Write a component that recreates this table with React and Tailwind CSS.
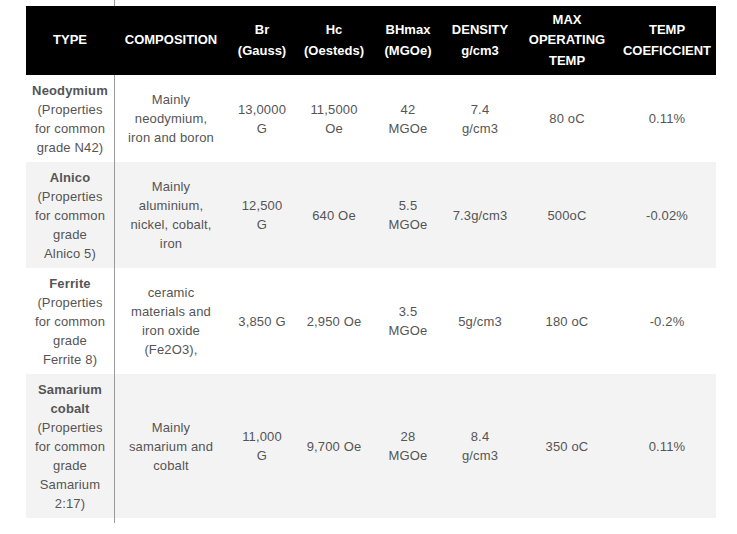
import React from "react";

const cols = [88, 114, 68, 76, 72, 72, 102, 98];

const headers = [
  ["TYPE"],
  ["COMPOSITION"],
  ["Br", "(Gauss)"],
  ["Hc", "(Oesteds)"],
  ["BHmax", "(MGOe)"],
  ["DENSITY", "g/cm3"],
  ["MAX", "OPERATING", "TEMP"],
  ["TEMP", "COEFICCIENT"],
];

const rows = [
  {
    name: ["Neodymium"],
    sub: ["(Properties", "for common", "grade N42)"],
    cells: [
      ["Mainly", "neodymium,", "iron and boron"],
      ["13,0000", "G"],
      ["11,5000", "Oe"],
      ["42", "MGOe"],
      ["7.4", "g/cm3"],
      ["80 oC"],
      ["0.11%"],
    ],
  },
  {
    name: ["Alnico"],
    sub: ["(Properties", "for common", "grade", "Alnico 5)"],
    cells: [
      ["Mainly", "aluminium,", "nickel, cobalt,", "iron"],
      ["12,500", "G"],
      ["640 Oe"],
      ["5.5", "MGOe"],
      ["7.3g/cm3"],
      ["500oC"],
      ["-0.02%"],
    ],
  },
  {
    name: ["Ferrite"],
    sub: ["(Properties", "for common", "grade", "Ferrite 8)"],
    cells: [
      ["ceramic", "materials and", "iron oxide", "(Fe2O3),"],
      ["3,850 G"],
      ["2,950 Oe"],
      ["3.5", "MGOe"],
      ["5g/cm3"],
      ["180 oC"],
      ["-0.2%"],
    ],
  },
  {
    name: ["Samarium", "cobalt"],
    sub: ["(Properties", "for common", "grade", "Samarium", "2:17)"],
    cells: [
      ["Mainly", "samarium and", "cobalt"],
      ["11,000", "G"],
      ["9,700 Oe"],
      ["28", "MGOe"],
      ["8.4", "g/cm3"],
      ["350 oC"],
      ["0.11%"],
    ],
  },
];

function Lines({ lines }) {
  return lines.map((l, i) => (
    <React.Fragment key={i}>
      {i > 0 && <br />}
      {l}
    </React.Fragment>
  ));
}

export default function App() {
  return (
    <div
      className="relative w-[737px] h-[534px] bg-white pt-[6px] pl-[26px]"
      style={{ fontFamily: '"Liberation Sans", Arial, sans-serif' }}
    >
      <div className="absolute left-[114px] top-0 h-[523px] w-px bg-[#9a9a9a] z-[1]" />
      <table className="table-fixed border-collapse w-[690px]">
        <colgroup>
          {cols.map((w, i) => (
            <col key={i} style={{ width: w }} />
          ))}
        </colgroup>
        <thead>
          <tr className="bg-black h-[69px]">
            {headers.map((h, i) => (
              <th
                key={i}
                className="relative z-[2] bg-black text-white font-bold text-[13px] leading-[20.5px] text-center align-middle px-0 py-0 whitespace-nowrap"
              >
                <Lines lines={h} />
              </th>
            ))}
          </tr>
        </thead>
        <tbody>
          {rows.map((r, ri) => (
            <tr key={ri} className={ri % 2 === 1 ? "bg-[#f3f3f3]" : "bg-white"}>
              <td className="text-center align-middle text-[13px] leading-[19px] text-[#555] tracking-[0.15px] py-[5.5px] px-0 whitespace-nowrap">
                <span className="font-bold">
                  <Lines lines={r.name} />
                </span>
                <br />
                <Lines lines={r.sub} />
              </td>
              {r.cells.map((c, ci) => (
                <td
                  key={ci}
                  className="text-center align-middle text-[13px] leading-[19px] text-[#555] tracking-[0.15px] py-[5.5px] px-0 whitespace-nowrap"
                >
                  <Lines lines={c} />
                </td>
              ))}
            </tr>
          ))}
        </tbody>
      </table>
    </div>
  );
}
